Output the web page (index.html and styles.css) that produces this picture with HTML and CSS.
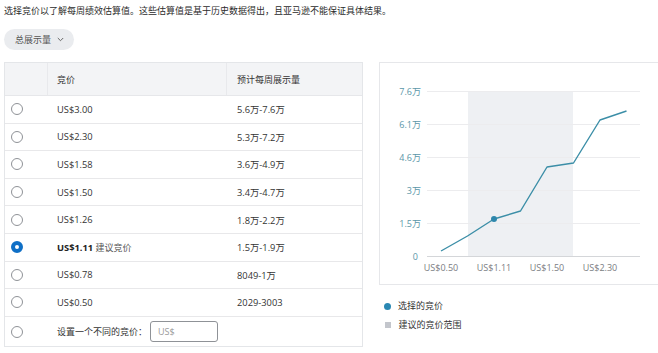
FILE: index.html
```html
<!DOCTYPE html>
<html lang="zh">
<head>
<meta charset="utf-8">
<link rel="stylesheet" href="styles.css">
</head>
<body>
<p class="intro">选择竞价以了解每周绩效估算值。这些估算值是基于历史数据得出，且亚马逊不能保证具体结果。</p>
<div class="pill"><span class="pill-text">总展示量</span>
  <svg class="chev" width="7" height="5" viewBox="0 0 7 5"><path d="M0.8 1 L3.5 3.7 L6.2 1" fill="none" stroke="#666" stroke-width="1"/></svg>
</div>
<div class="main">
  <div class="table">
    <div class="row head">
      <div class="cell c1"></div>
      <div class="cell c2">竞价</div>
      <div class="cell c3">预计每周展示量</div>
    </div>
    <div class="row"><div class="cell c1"><span class="radio"></span></div><div class="cell c2">US$3.00</div><div class="cell c3">5.6万-7.6万</div></div>
    <div class="row"><div class="cell c1"><span class="radio"></span></div><div class="cell c2">US$2.30</div><div class="cell c3">5.3万-7.2万</div></div>
    <div class="row"><div class="cell c1"><span class="radio"></span></div><div class="cell c2">US$1.58</div><div class="cell c3">3.6万-4.9万</div></div>
    <div class="row"><div class="cell c1"><span class="radio"></span></div><div class="cell c2">US$1.50</div><div class="cell c3">3.4万-4.7万</div></div>
    <div class="row"><div class="cell c1"><span class="radio"></span></div><div class="cell c2">US$1.26</div><div class="cell c3">1.8万-2.2万</div></div>
    <div class="row"><div class="cell c1"><span class="radio on"></span></div><div class="cell c2"><b>US$1.11</b>&nbsp;<span class="sugg">建议竞价</span></div><div class="cell c3">1.5万-1.9万</div></div>
    <div class="row"><div class="cell c1"><span class="radio"></span></div><div class="cell c2">US$0.78</div><div class="cell c3">8049-1万</div></div>
    <div class="row"><div class="cell c1"><span class="radio"></span></div><div class="cell c2">US$0.50</div><div class="cell c3">2029-3003</div></div>
    <div class="row last"><div class="cell c1"><span class="radio"></span></div><div class="cell c23">设置一个不同的竞价：<span class="input">US$</span></div></div>
  </div>
  <div class="side">
    <div class="card">
      <svg class="chart" width="300" height="221" viewBox="380 64 300 221">
        <rect x="468" y="92" width="105" height="165" fill="#eef0f3"/>
        <g stroke="#ececee" stroke-width="1">
          <line x1="427" y1="92.5" x2="640" y2="92.5"/>
          <line x1="427" y1="125.5" x2="640" y2="125.5"/>
          <line x1="427" y1="158.5" x2="640" y2="158.5"/>
          <line x1="427" y1="191.5" x2="640" y2="191.5"/>
          <line x1="427" y1="224.5" x2="640" y2="224.5"/>
        </g>
        <line x1="427" y1="257.5" x2="640" y2="257.5" stroke="#d4d6d9" stroke-width="1.2"/>
        <g class="ylab" text-anchor="end">
          <text x="421" y="95.5">7.6万</text>
          <text x="421" y="128.5">6.1万</text>
          <text x="421" y="161.5">4.6万</text>
          <text x="421" y="194.5">3万</text>
          <text x="421" y="227.5">1.5万</text>
          <text x="418" y="260.5">0</text>
        </g>
        <g class="xlab" text-anchor="middle">
          <text x="441" y="272">US$0.50</text>
          <text x="494" y="272">US$1.11</text>
          <text x="547" y="272">US$1.50</text>
          <text x="600" y="272">US$2.30</text>
        </g>
        <polyline points="441,252 467.5,237 494,220 520.5,212 547,168 573.5,164 600,121 626.5,112" fill="none" stroke="#3b8ea7" stroke-width="1.4" stroke-linejoin="round"/>
        <circle cx="494" cy="220" r="3" fill="#2e87ac"/>
      </svg>
    </div>
    <div class="legend">
      <div class="leg"><span class="ldot"></span>选择的竞价</div>
      <div class="leg"><span class="lsq"></span>建议的竞价范围</div>
    </div>
  </div>
</div>
</body>
</html>
```
FILE: styles.css
```css
html, body {
  margin: 0;
  padding: 0;
  background: #ffffff;
  overflow: hidden;
}
body {
  width: 658px;
  height: 353px;
  padding: 0 4px;
  box-sizing: border-box;
  font-family: "Open Sans", "Noto Sans CJK SC", sans-serif;
  font-size: 9px;
  color: #333333;
}
.intro {
  margin: 0;
  padding-top: 4px;
  line-height: 14px;
  color: #2b2b2b;
}
.pill {
  display: inline-flex;
  align-items: center;
  gap: 6px;
  margin-top: 11px;
  height: 21px;
  padding: 0 10px 0 11px;
  border-radius: 11px;
  background: #eaecef;
  color: #555;
  box-sizing: border-box;
  white-space: nowrap;
}
.pill-text { white-space: nowrap; }
.chev { display: block; flex-shrink: 0; }
.main {
  display: flex;
  gap: 16px;
  margin-top: 12px;
  align-items: flex-start;
}
.table {
  width: 359px;
  flex-shrink: 0;
  border: 1px solid #e4e6e9;
  box-sizing: border-box;
}
.row {
  display: grid;
  grid-template-columns: 43px 179px 1fr;
  height: 27.6px;
  border-bottom: 1px solid #e8e8ea;
  box-sizing: border-box;
  align-items: center;
}
.row.head {
  height: 33px;
  background: #f3f4f6;
  border-bottom: 1px solid #e6e7ea;
  align-items: stretch;
}
.row.head .cell {
  display: flex;
  align-items: center;
}
.row.head .c1, .row.head .c2 {
  border-right: 1px solid #e8e9ec;
}
.row.last {
  height: 29.5px;
  border-bottom: none;
  grid-template-columns: 43px 1fr;
}
.c1 {
  padding-left: 6px;
  display: flex;
  align-items: center;
}
.c2 { padding-left: 9px; font-size: 9.3px; }
.c3 { padding-left: 10px; font-size: 9.3px; }
.row.head .c2, .row.head .c3 { font-size: 9px; }
.c23 {
  padding-left: 9px;
  display: flex;
  align-items: center;
}
.radio {
  display: block;
  width: 12px;
  height: 12px;
  border-radius: 50%;
  border: 1px solid #8f9297;
  box-sizing: border-box;
  background: #fff;
}
.radio.on {
  border: 4px solid #0f6fc6;
  background: #ffffff;
}
b { font-weight: 700; color: #222; }
.sugg { color: #555; font-size: 9px; }
.input {
  display: inline-flex;
  align-items: center;
  margin-left: 3px;
  width: 68px;
  height: 21px;
  padding-left: 7px;
  box-sizing: border-box;
  border: 1px solid #8f9297;
  border-radius: 3px;
  color: #9a9a9a;
}
.side {
  flex-shrink: 0;
}
.card {
  width: 300px;
  height: 223px;
  border: 1px solid #e6e7ea;
  box-sizing: border-box;
}
.chart { display: block; }
.ylab text {
  font-family: "Open Sans", "Noto Sans CJK SC", sans-serif;
  font-size: 9px;
  fill: #5a96a8;
}
.xlab text {
  font-family: "Open Sans", "Noto Sans CJK SC", sans-serif;
  font-size: 9px;
  fill: #7a7d82;
}
.legend {
  display: flex;
  flex-direction: column;
  gap: 5px;
  padding-top: 14px;
  padding-left: 5px;
}
.leg {
  display: flex;
  align-items: center;
  line-height: 14px;
  color: #333;
}
.ldot {
  width: 7px;
  height: 7px;
  border-radius: 50%;
  background: #2a88b3;
  margin-right: 7px;
}
.lsq {
  width: 6px;
  height: 6px;
  background: #c3c6cc;
  margin: 0 8px 0 0.5px;
}
```
